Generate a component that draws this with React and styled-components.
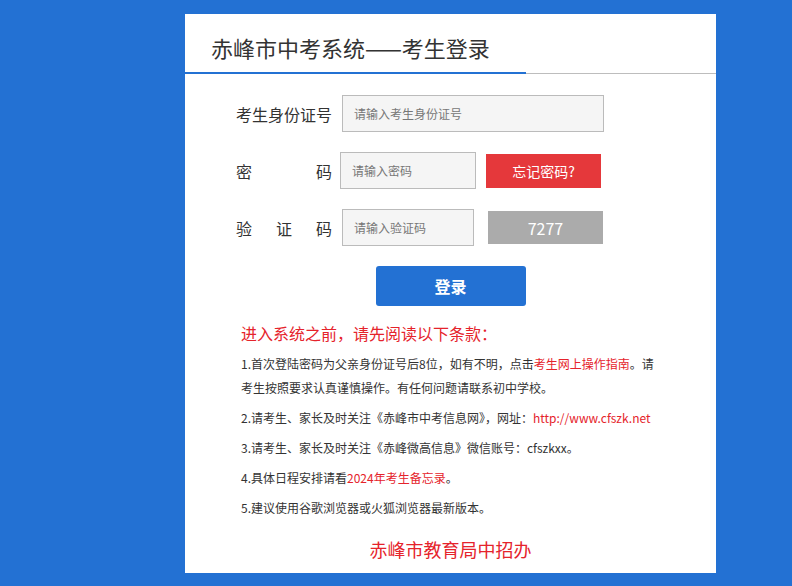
import React from "react";
import styled, { createGlobalStyle } from "styled-components";

const GlobalStyle = createGlobalStyle`
  html, body {
    margin: 0;
    padding: 0;
    background: #2371d3;
    font-family: "Noto Sans CJK SC", "Noto Sans", sans-serif;
    color: #333;
  }
`;

const Page = styled.div`
  height: 586px;
  overflow: hidden;
  padding-top: 14px;
  box-sizing: border-box;
`;

const Card = styled.div`
  margin-left: 185px;
  width: 531px;
  height: 559px;
  background: #fff;
`;

const Header = styled.div`
  height: 60px;
  border-bottom: 1px solid #bdbdbd;
  box-sizing: border-box;
  display: flex;
  align-items: flex-end;
`;

const Title = styled.h1`
  margin: 0 0 -1px;
  width: 341px;
  height: 60px;
  box-sizing: border-box;
  padding: 8px 0 0 26px;
  border-bottom: 2px solid #2371d3;
  font-size: 22px;
  font-weight: 400;
  line-height: 50px;
  color: #333;
`;

const Form = styled.div`
  padding-top: 21px;
  display: flex;
  flex-direction: column;
  gap: 20px;
`;

const Row = styled.div`
  display: flex;
  align-items: center;
  padding-left: 51px;
`;

const Label = styled.label`
  width: 96px;
  font-size: 16px;
  color: #333;
  text-align: justify;
  text-align-last: justify;
  margin-right: ${(p) => p.gap || 10}px;
`;

const Input = styled.input`
  width: ${(p) => p.w}px;
  height: 37px;
  box-sizing: border-box;
  border: 1px solid #bbb;
  background: #f5f5f5;
  padding: 0 11px;
  font-family: inherit;
  font-size: 12px;
  color: #333;
  outline: none;
  &::placeholder {
    color: #777;
  }
`;

const SideBox = styled.div`
  margin-left: ${(p) => p.ml}px;
  width: 115px;
  height: ${(p) => p.h}px;
  display: flex;
  align-items: center;
  justify-content: center;
  color: #fff;
  font-size: ${(p) => p.fs}px;
  background: ${(p) => p.bg};
  cursor: pointer;
`;

const LoginButton = styled.button`
  display: block;
  margin: 20px auto 0;
  width: 150px;
  height: 40px;
  border: none;
  border-radius: 3px;
  background: #2371d3;
  color: #fff;
  font-family: inherit;
  font-size: 16px;
  font-weight: 700;
  cursor: pointer;
`;

const Notice = styled.div`
  margin: 16px 0 0 56px;
  width: 424px;
`;

const NoticeTitle = styled.div`
  color: #e5232b;
  font-size: 16px;
  line-height: 22px;
  margin-bottom: 8px;
`;

const Item = styled.p`
  margin: 0 0 6px;
  font-size: 12px;
  line-height: 24px;
  color: #333;
`;

const Red = styled.span`
  color: #e5232b;
`;

const Footer = styled.div`
  margin-top: 17px;
  text-align: center;
  color: #e5232b;
  font-size: 18px;
  line-height: 24px;
`;

export default function App() {
  return (
    <Page>
      <GlobalStyle />
      <Card>
        <Header>
          <Title>赤峰市中考系统——考生登录</Title>
        </Header>
        <Form>
          <Row>
            <Label>考生身份证号</Label>
            <Input w={262} placeholder="请输入考生身份证号" />
          </Row>
          <Row>
            <Label gap={8}>密码</Label>
            <Input w={136} placeholder="请输入密码" />
            <SideBox ml={10} h={34} fs={14} bg="#e5383b">
              忘记密码?
            </SideBox>
          </Row>
          <Row>
            <Label>验证码</Label>
            <Input w={132} placeholder="请输入验证码" />
            <SideBox ml={14} h={33} fs={16} bg="#ababab">
              7277
            </SideBox>
          </Row>
        </Form>
        <LoginButton>登录</LoginButton>
        <Notice>
          <NoticeTitle>进入系统之前，请先阅读以下条款：</NoticeTitle>
          <Item>
            1.首次登陆密码为父亲身份证号后8位，如有不明，点击<Red>考生网上操作指南</Red>。请考生按照要求认真谨慎操作。有任何问题请联系初中学校。
          </Item>
          <Item>
            2.请考生、家长及时关注《赤峰市中考信息网》，网址：<Red>http://www.cfszk.net</Red>
          </Item>
          <Item>3.请考生、家长及时关注《赤峰微高信息》微信账号：cfszkxx。</Item>
          <Item>
            4.具体日程安排请看<Red>2024年考生备忘录</Red>。
          </Item>
          <Item>5.建议使用谷歌浏览器或火狐浏览器最新版本。</Item>
        </Notice>
        <Footer>赤峰市教育局中招办</Footer>
      </Card>
    </Page>
  );
}
